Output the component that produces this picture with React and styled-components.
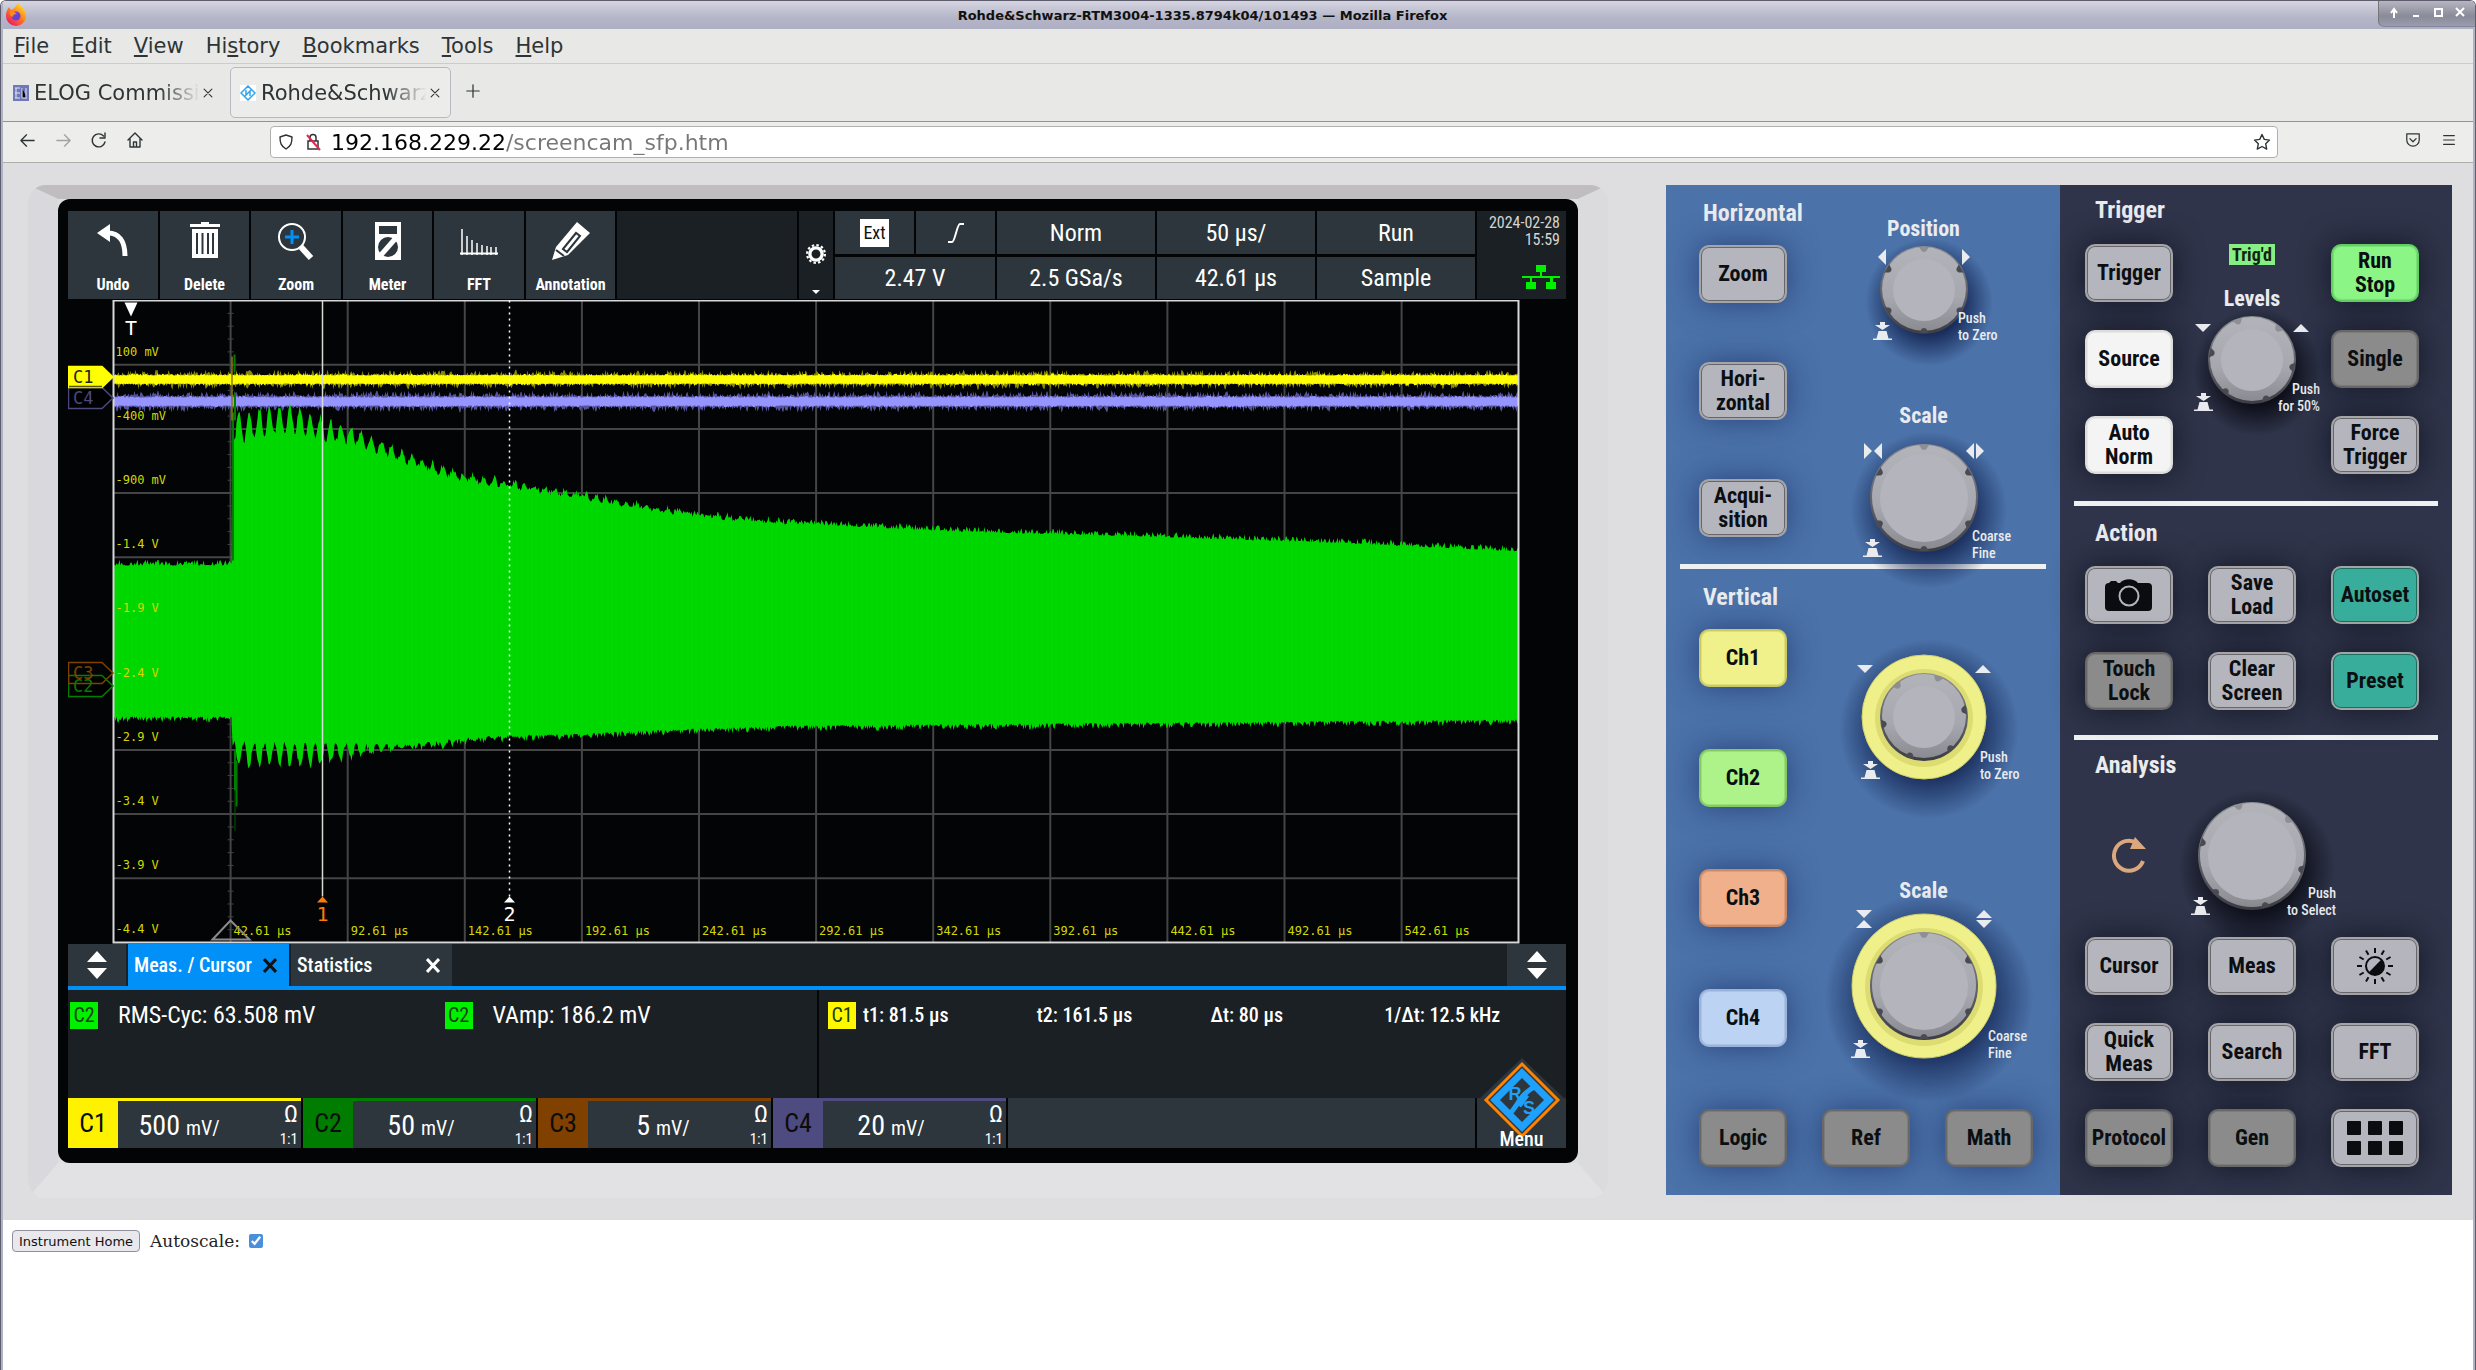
import React from "react";
import styled, { createGlobalStyle } from "styled-components";

const narrow = `"Roboto Condensed", "Liberation Sans Narrow", "Open Sans Condensed", "Liberation Sans", sans-serif`;
const mono = `"DejaVu Sans Mono", monospace`;

const GlobalStyle = createGlobalStyle`
  * {
    box-sizing: border-box;
  }
  body {
    margin: 0;
    background: white;
    font-family: "DejaVu Sans", sans-serif;
  }
  button {
    font: inherit;
    color: inherit;
    padding: 0;
    border: none;
    background: none;
  }
`;

/* ---------- browser window ---------- */

const Window = styled.div`
  min-height: 100vh;
  border: 1px solid #5d5d6e;
  border-bottom: none;
  border-radius: 6px 6px 0 0;
  overflow: hidden;
`;

const Frame = styled.div`
  min-height: calc(100vh - 1px);
  border: solid #b0b2c5;
  border-width: 0 2px;
`;

const TitleBar = styled.header`
  display: flex;
  align-items: center;
  height: 28px;
  background: linear-gradient(#d5d5e2, #b4b5c7 60%, #aeafc2);
  font-size: 13px;
  font-weight: bold;
  color: #111;

  h1 {
    flex: 1;
    margin: 0;
    font-size: inherit;
    text-align: center;
  }
`;

const FirefoxIcon = styled.svg`
  margin-left: 2px;
`;

const WindowButtons = styled.div`
  display: flex;
  align-self: flex-start;
  height: 26px;
  margin-right: -2px;
  padding: 0 4px 0 4px;
  background: linear-gradient(#b5b6c0, #8a8b99 60%, #9a9bac);
  border-left: 1px solid #777;
  border-bottom: 1px solid #85869a;
  border-bottom-left-radius: 6px;

  button {
    width: 22px;
  }
`;

const MenuBar = styled.nav`
  display: flex;
  align-items: center;
  gap: 22px;
  height: 35px;
  padding-left: 11px;
  background: #e8e8e6;
  border-bottom: 1px solid #cccccb;
  font-size: 21px;
  color: #2e3436;
`;

const TabStrip = styled.div`
  display: flex;
  align-items: center;
  gap: 6px;
  height: 58px;
  background: #e8e8e6;
  border-bottom: 1px solid #93938f;
`;

const Tab = styled.div`
  display: flex;
  align-items: center;
  gap: 5px;
  width: 221px;
  height: 51px;
  padding: 0 7px 0 9px;
  border: 1px solid ${(p) => (p.$active ? "#b7b9c2" : "transparent")};
  border-radius: 5px;
  background: ${(p) => (p.$active ? "#ececea" : "none")};
  font-size: 21px;
  color: #2e3436;

  span {
    flex: 1;
    overflow: hidden;
    white-space: nowrap;
    mask-image: linear-gradient(90deg, #000 75%, transparent);
  }
`;

const CloseTab = styled.button`
  width: 16px;
  height: 24px;
  margin-left: -5px;
`;

const NewTab = styled.button`
  width: 32px;
  height: 32px;
`;

const NavBar = styled.div`
  display: flex;
  align-items: center;
  height: 41px;
  background: #ededeb;
  border-bottom: 1px solid #afafac;
  color: #2e3436;
`;

const NavButtons = styled.div`
  display: flex;
  justify-content: ${(p) => (p.$end ? "flex-end" : "flex-start")};
  width: ${(p) => (p.$end ? 195 : 267)}px;
  padding: 0 6px;

  button {
    width: 36px;
    height: 32px;
  }

  button:disabled {
    opacity: 0.4;
  }
`;

const UrlBar = styled.div`
  display: flex;
  flex: 1;
  align-items: center;
  gap: 8px;
  height: 32px;
  padding: 0 6px;
  border: 1px solid #b0b0ad;
  border-radius: 4px;
  background: white;

  input {
    flex: 1;
    border: none;
    outline: none;
    padding: 0;
    font: 22px "DejaVu Sans", sans-serif;
    color: transparent;
    background: linear-gradient(90deg, #000 175px, #777 175px);
    background-clip: text;
  }
`;

/* ---------- instrument ---------- */

const Instrument = styled.main`
  display: flex;
  align-items: flex-start;
  gap: 58px;
  padding: 22px 21px 22px 25px;
  background: #dedde0;
`;

const Bezel = styled.section`
  flex: 1;
  min-width: 0;
  border: solid;
  border-width: 14px 30px 35px;
  border-color: #bfbdc0 #dbdadd #e2e2e4 #d9d8dc;
  border-radius: 18px;
`;

const Screen = styled.div`
  padding: 12px 12px 15px 10px;
  background: #030406;
  border-radius: 12px;
  font-family: ${narrow};
  color: white;
`;

const Toolbar = styled.div`
  display: grid;
  grid-template-columns: repeat(3, 90px 89px) 1fr 34px 160px repeat(3, 158px) 89px;
  gap: 2px;
  height: 88px;
  margin-bottom: 1px;
`;

const Tool = styled.button`
  display: flex;
  flex-direction: column;
  align-items: center;
  justify-content: space-between;
  padding: 8px 0 4px;
  background: #2c363c;
  font-size: 16px;
  font-weight: bold;
  line-height: 20px;
`;

const DarkCell = styled.div`
  background: #1a2023;
`;

const GearButton = styled.button`
  display: flex;
  flex-direction: column;
  align-items: center;
  justify-content: flex-end;
  gap: 26px;
  padding-bottom: 5px;
  background: #1a2023;
`;

const InfoColumn = styled.div`
  display: grid;
  grid-template-rows: 43px 42px;
  gap: 3px;
`;

const Info = styled.div`
  display: flex;
  align-items: center;
  justify-content: center;
  background: #2c363c;
  font-size: 24px;
`;

const InfoSplit = styled.div`
  display: grid;
  grid-template-columns: 1fr 1fr;
  gap: 2px;
`;

const ExtBadge = styled.span`
  padding: 0 3px;
  background: white;
  color: #111;
  font-size: 18px;
  line-height: 28px;
`;

const Clock = styled.div`
  display: flex;
  flex-direction: column;
  align-items: flex-end;
  justify-content: space-between;
  padding: 3px 6px 10px;
  background: #1a2023;
  font-size: 16px;
  line-height: 17px;
  text-align: right;
  white-space: nowrap;
  color: #d5d5d5;
`;

const Plot = styled.svg`
  display: block;
  width: 100%;
  height: auto;
`;

const TabRow = styled.div`
  display: grid;
  grid-template-columns: 58px 161px 161px 1fr 59px;
  gap: 0 2px;
  height: 46px;
  border-bottom: 4px solid #0190f7;
  background: #1a2023;
`;

const Stepper = styled.button`
  display: flex;
  align-items: center;
  justify-content: center;
  background: #2c363c;
`;

const PanelTab = styled.div`
  display: flex;
  align-items: center;
  justify-content: space-between;
  padding: 0 12px 0 6px;
  background: ${(p) => (p.$active ? "#0190f7" : "#2c363c")};
  font-size: 20px;
  font-weight: 500;

  button {
    display: flex;
    color: ${(p) => (p.$active ? "#111" : "white")};
  }
`;

const Readouts = styled.div`
  display: grid;
  grid-template-columns: 1fr 1fr 2fr;
  height: 108px;
  background: #1a2023;
`;

const Measurement = styled.div`
  display: flex;
  align-items: center;
  gap: 20px;
  height: 50px;
  padding-left: 2px;
  font-size: 24px;
`;

const Cursors = styled.div`
  border-left: 2px solid #050607;
`;

const CursorValues = styled.div`
  display: grid;
  grid-template-columns: 28px repeat(4, minmax(0, 1fr));
  align-items: center;
  gap: 7px;
  height: 50px;
  padding: 0 15px 0 9px;
  font-size: 20px;
  font-weight: 500;
`;

const Source = styled.span`
  width: 28px;
  background: ${(p) => p.$color};
  color: #12420f;
  font-size: 20px;
  font-weight: normal;
  line-height: 27px;
  text-align: center;
`;

const Channels = styled.div`
  display: grid;
  grid-template-columns: repeat(4, 233px) 1fr 89px;
  grid-template-rows: 50px;
  gap: 2px;
`;

const Channel = styled.div`
  display: grid;
  grid-template-columns: 50px 62px 1fr auto;
  grid-template-rows: 47px;
  background: #2c363c;
  border-top: 3px solid ${(p) => p.$color};

  b {
    background: ${(p) => p.$color};
    color: #0c0c0c;
    font-size: 26px;
    font-weight: normal;
    line-height: 44px;
    text-align: center;
  }
`;

const Scale = styled.span`
  font-size: ${(p) => (p.$unit ? 20 : 28)}px;
  line-height: ${(p) => (p.$unit ? 54 : 50)}px;
  padding-left: ${(p) => (p.$unit ? 6 : 0)}px;
  text-align: ${(p) => (p.$unit ? "left" : "right")};
`;

const Coupling = styled.span`
  display: flex;
  flex-direction: column;
  justify-content: space-between;
  padding: 0 3px 1px 0;
  text-align: right;
  font-size: 15px;
  line-height: 16px;

  i {
    font-style: normal;
    font-size: 24px;
    line-height: 26px;
  }
`;

const Blank = styled.div`
  background: #2c363c;
`;

const MenuButton = styled.button`
  display: flex;
  flex-direction: column;
  align-items: center;
  justify-content: flex-end;
  background: #2c363c;
  font-size: 20px;
  font-weight: 500;
  line-height: 18px;

  svg {
    flex: none;
    margin-bottom: -10px;
  }
`;

/* ---------- front panel ---------- */

const FrontPanel = styled.section`
  display: grid;
  grid-template-columns: 394px 392px;
  font-family: ${narrow};
  font-weight: bold;
  color: #e9ebee;
`;

const BluePanel = styled.div`
  background: #4b72a9;
`;

const DarkPanel = styled.div`
  background: #2f344a;
`;

const Rule = styled.hr`
  height: ${(p) => p.$size}px;
  margin: 0 14px;
  border: none;
  background: #f0f1f2;
`;

const SplitSection = styled.div`
  display: grid;
  grid-template-columns: 88px 1fr;
  padding-left: 33px;
`;

const Section = styled.div`
  padding: ${(p) => p.$top}px 32px ${(p) => p.$bottom}px 25px;
`;

const Heading = styled.h2`
  margin: 0 0 0 ${(p) => p.$indent}px;
  font-size: 24px;
  line-height: 30px;
`;

const KeyColumn = styled.div`
  display: flex;
  flex-direction: column;
  gap: ${(p) => p.$gap}px;
  padding-top: 17px;
`;

const LeftSide = styled.div`
  padding-top: 13px;
`;

const KnobSide = styled.div`
  display: flex;
  flex-direction: column;
  align-items: center;
  padding-top: ${(p) => p.$top}px;
`;

const KeyRow = styled.div`
  display: flex;
  gap: 35px;
  padding: 62px 0 28px 33px;
`;

const KeyGrid = styled.div`
  display: grid;
  grid-template-columns: repeat(3, 88px);
  gap: 28px 35px;
  padding-top: ${(p) => p.$top}px;
`;

const KnobCell = styled.div`
  grid-area: 1 / 2 / 4 / 3;
  display: flex;
  flex-direction: column;
  align-items: center;
`;

const AnalysisTop = styled.div`
  display: grid;
  grid-template-columns: repeat(3, 88px);
  gap: 35px;
  place-items: center;
`;

const KnobLabel = styled.h3`
  margin: 0;
  font-size: 22px;
  line-height: 26px;
`;

const Triggered = styled.span`
  margin-bottom: 21px;
  padding: 0 3px;
  background: #86ee85;
  color: #10240f;
  font-size: 18px;
  line-height: 21px;
`;

const faces = {
  gray: ["#b5b5be", "#a5a5a8", "#66666c"],
  off: ["#8b8b8b", "#686868", "#7c7c7c"],
  white: ["#f4f4f4", "#dcdcdc", "#e8e8e8"],
  run: ["#8bf586", "#63cf63", "#7ae278"],
  teal: ["#39ad9b", "#a0a6a4", "#1c6e62"],
  ch1: ["#f0f18b", "#c9c966", "#dfe07b"],
  ch2: ["#aef38a", "#83c964", "#9ae077"],
  ch3: ["#f1b08c", "#c98a67", "#e09f7a"],
  ch4: ["#bdd3f3", "#9bb3d8", "#aac3e6"],
};

const Key = styled.button`
  display: flex;
  align-items: center;
  justify-content: center;
  width: 88px;
  height: 58px;
  border: 2px solid ${(p) => faces[p.$face][1]};
  border-radius: 10px;
  background: ${(p) => faces[p.$face][0]};
  box-shadow: inset 0 0 0 1px ${(p) => faces[p.$face][2]},
    0 0 30px ${(p) => (p.$blue ? "rgba(15, 30, 85, 0.55)" : "rgba(8, 10, 20, 0.7)")};
  font-size: 22px;
  line-height: 24px;
  white-space: pre-line;
  color: #0c0f12;
`;

const KnobArt = styled.svg`
  display: block;
  overflow: visible;
`;

const Footer = styled.footer`
  display: flex;
  align-items: center;
  gap: 10px;
  padding: 10px 9px;
  font: 17px "DejaVu Serif", serif;
  color: #222;

  button {
    height: 22px;
    padding: 0 6px;
    border: 1px solid #8f8f9d;
    border-radius: 4px;
    background: #e9e9ed;
    font: 13px "DejaVu Sans", sans-serif;
    color: #111;
  }

  input {
    width: 14px;
    height: 14px;
    margin: 0 0 0 9px;
    vertical-align: -1px;
    accent-color: #4a8fdc;
  }
`;

/* ---------- waveform ---------- */

// small seeded generator so the noise is the same on every render
function noise(seed) {
  let s = seed;
  return () => {
    s = (s * 16807) % 2147483647;
    return s / 2147483647;
  };
}

function lerp(points, x) {
  for (let i = 1; i < points.length; i++) {
    if (x <= points[i][0]) {
      const [x0, y0] = points[i - 1];
      const [x1, y1] = points[i];
      return y0 + ((x - x0) / (x1 - x0)) * (y1 - y0);
    }
  }
  return points[points.length - 1][1];
}

function band(y, core, spread, seed) {
  const rnd = noise(seed);
  const top = [];
  const bottom = [];
  for (let x = 0; x <= 1405; x++) {
    top.push(`${x},${(y - core - spread * rnd() ** 3).toFixed(1)}`);
    bottom.unshift(`${x},${(y + core + spread * rnd() ** 3).toFixed(1)}`);
  }
  return [...top, ...bottom].join(" ");
}

const upper = [
  [120, 112], [135, 112], [160, 108], [185, 109], [209, 120], [243, 130], [294, 156],
  [345, 174], [396, 183], [447, 191], [498, 200], [549, 209], [600, 216], [651, 221],
  [720, 225], [834, 231], [1055, 237], [1229, 243], [1405, 251],
];
const upperDip = [[120, 34], [140, 30], [209, 22], [243, 16], [294, 9], [396, 6], [549, 4], [760, 0], [1405, 0]];
const lower = [
  [120, 463], [190, 464], [209, 461], [235, 456], [266, 450], [313, 445], [352, 440],
  [396, 436], [469, 433], [527, 430], [677, 425], [1405, 419],
];
const lowerDip = [[120, 24], [200, 22], [235, 14], [266, 7], [320, 4], [450, 0], [1405, 0]];

function greenTrace() {
  const rnd = noise(77);
  const top = [];
  const bottom = [];
  for (let x = 0; x <= 1405; x++) {
    const up = 6 * rnd() ** 2;
    const down = 6 * rnd() ** 2;
    if (x < 119) {
      top.push(`${x},${(265 - up).toFixed(1)}`);
      bottom.unshift(`${x},${(416 + down).toFixed(1)}`);
      continue;
    }
    const wave = Math.abs(Math.sin(((x - 156) * Math.PI) / 10.2));
    top.push(`${x},${(lerp(upper, x) + lerp(upperDip, x) * wave ** 2 - up).toFixed(1)}`);
    bottom.unshift(`${x},${(lerp(lower, x) - lerp(lowerDip, x) * wave ** 2 + down).toFixed(1)}`);
  }
  return [...top, ...bottom].join(" ");
}

const yellowCore = band(79, 4, 2, 11);
const yellowHaze = band(79, 4, 6, 23);
const violetCore = band(101, 4, 2, 31);
const violetHaze = band(101, 5, 6, 47);
const green = greenTrace();

const voltLabels = ["100 mV", "-400 mV", "-900 mV", "-1.4 V", "-1.9 V", "-2.4 V", "-2.9 V", "-3.4 V", "-3.9 V", "-4.4 V"];
const columns = Array.from({ length: 12 }, (_, i) => i);
const ticks = Array.from({ length: 50 }, (_, i) => i);

const COL = 117.1;
const ROW = 64.2;

function Marker({ y, color, label, fill = "black", text = color }) {
  return (
    <g>
      <path d={`M0.5 ${y - 10.5}H34L45 ${y}L34 ${y + 10.5}H0.5Z`} fill={fill} stroke={color} strokeWidth="1.5" />
      <text x="5" y={y + 6} fontSize="17" fill={text} fontFamily={mono}>{label}</text>
    </g>
  );
}

function Waveform() {
  return (
    <Plot viewBox="0 0 1498 644" role="img" aria-label="Waveform">
      <defs>
        <pattern id="sweep" width="5" height="10" patternUnits="userSpaceOnUse">
          <rect width="2" height="10" fill="#00c400" opacity="0.16" />
        </pattern>
      </defs>
      <g transform="translate(45.5 0.5)">
        <g stroke="#454545" strokeWidth="2">
          {columns.slice(1).map((i) => (
            <path key={i} d={`M${i * COL} 0V642`} />
          ))}
          {voltLabels.slice(1).map((label, i) => (
            <path key={label} d={`M0 ${(i + 1) * ROW}H1405`} />
          ))}
          {ticks.map((i) => (
            <path key={i} d={`M${COL - 3} ${i * 12.84}h6`} strokeWidth="1" />
          ))}
        </g>
        <polygon points={violetHaze} fill="#55549a" />
        <polygon points={violetCore} fill="#9694ff" />
        <polygon points={green} fill="#00d900" />
        <polygon points={green} fill="url(#sweep)" />
        <path d="M119.5 112V260" stroke="#007a00" strokeWidth="2" />
        <path d="M121 54V72M121.5 92V120M121.5 450V490M123 460V506" stroke="#007d00" strokeWidth="2" />
        <path d="M121.5 490V530" stroke="#005a00" strokeWidth="1" />
        <polygon points={yellowHaze} fill="#8a8a00" />
        <polygon points={yellowCore} fill="#ffff00" />
        <path d="M118.5 56V120" stroke="#8a7a00" strokeWidth="1.5" />
        <rect width="1405" height="642" fill="none" stroke="#d8d8d8" strokeWidth="2" />

        <g fontFamily={mono} fontSize="12" fill="#d2d800">
          {voltLabels.map((label, i) => (
            <text key={label} x="2" y={55 + i * ROW}>{label}</text>
          ))}
          {columns.slice(1).map((i) => (
            <text key={i} x={i * COL + 3} y="634">{(i * 50 - 7.39).toFixed(2)} µs</text>
          ))}
        </g>
        <path d="M99 639L117 620L136 639Z" fill="none" stroke="#8a8a8a" strokeWidth="2" />

        <path d="M209 0V596" stroke="#d5dcd5" strokeWidth="1.5" />
        <path d="M396 0V596" stroke="white" strokeWidth="1.5" strokeDasharray="2 4" />
        <path d="M203.5 602l5.5 -6l5.5 6z" fill="#ff7b00" />
        <path d="M390.5 602l5.5 -6l5.5 6z" fill="white" />
        <g fontFamily={mono} fontSize="20" textAnchor="middle">
          <text x="209" y="620" fill="#ff7b00">1</text>
          <text x="396" y="620" fill="white">2</text>
          <text x="17.5" y="34" fill="white">T</text>
        </g>
        <path d="M11 2h13l-6.5 14z" fill="white" />
      </g>
      <Marker y={98} color="#4a4980" label="C4" />
      <Marker y={77} color="#ffff00" fill="#ffff00" text="#222" label="C1" />
      <path d="M1 86.5H34" stroke="#555500" strokeWidth="1.5" />
      <Marker y={386} color="#007f00" label="C2" />
      <Marker y={373} color="#804000" fill="none" label="C3" />
    </Plot>
  );
}

/* ---------- knobs ---------- */

const arrows = {
  horizontal: [["l"], ["r"]],
  squeezeH: [["r", "l"], ["l", "r"]],
  vertical: [["d"], ["u"]],
  squeezeV: [["d", "u"], ["u", "d"]],
};

const arrowPaths = {
  l: "M4 -8V8L-4 0Z",
  r: "M-4 -8V8L4 0Z",
  u: "M-8 4H8L0 -4Z",
  d: "M-8 -4H8L0 4Z",
};

function Arrow({ kinds, x, y }) {
  return kinds.map((kind, i) => {
    const shift = kinds.length === 1 ? 0 : i ? 5 : -5;
    const isH = kind === "l" || kind === "r";
    return (
      <path key={i} d={arrowPaths[kind]} transform={`translate(${x + (isH ? shift : 0)} ${y + (isH ? 0 : shift)})`} />
    );
  });
}

function Knob({ height, cy, r, ring, twist = 0, arrow, arrowAt = [0, 0], press, hint, hintAt, hintEnd, blue }) {
  const notches = [0, 60, 120, 180, 240, 300].map((a) => a + twist);
  const face = r > 50 ? r - 10 : r - 13;
  const id = `${blue ? "b" : "d"}${r}-${cy}`;
  return (
    <KnobArt width="88" height={height}>
      <defs>
        <radialGradient id={`s${id}`}>
          <stop offset="50%" stopColor={blue ? "#122350" : "#080a12"} stopOpacity="0.9" />
          <stop offset="100%" stopColor={blue ? "#122350" : "#080a12"} stopOpacity="0" />
        </radialGradient>
        <linearGradient id={`r${id}`} x1="0" y1="0" x2="0" y2="1">
          <stop offset="0%" stopColor="#b3b3ba" />
          <stop offset="60%" stopColor="#a7a7af" />
          <stop offset="100%" stopColor="#8a8a91" />
        </linearGradient>
        <linearGradient id={`e${id}`} x1="0" y1="0" x2="0" y2="1">
          <stop offset="0%" stopColor="#8d8d94" />
          <stop offset="100%" stopColor="#3c3d44" />
        </linearGradient>
      </defs>
      <g transform={`translate(44 ${cy})`}>
        <circle cx="5" cy="12" r={(ring || r) * 1.45} fill={`url(#s${id})`} />
        {ring && (
          <>
            <circle r={ring} fill="#eff089" stroke="#d0d068" />
            <circle r={r + 5} cy="1" fill="#dcdc72" />
          </>
        )}
        <circle r={r} fill={`url(#e${id})`} />
        <circle r={r - 2} cy="-1" fill={`url(#r${id})`} />
        {notches.map((a) => (
          <path
            key={a}
            d={`M-5 ${1 - r}H5C3 ${3 - r} 3 ${6 - r} 0 ${6 - r}S-3 ${3 - r} -5 ${1 - r}Z`}
            transform={`rotate(${a})`}
            fill={Math.cos((a * Math.PI) / 180) > 0.6 ? "#8e8e95" : "#4a4b52"}
          />
        ))}
        <circle r={face} fill="#b4b4bd" />
        <g fill="#e9ebee">
          {arrow && (
            <>
              <Arrow kinds={arrows[arrow][0]} x={-arrowAt[0]} y={arrowAt[1]} />
              <Arrow kinds={arrows[arrow][1]} x={arrowAt[0]} y={arrowAt[1]} />
            </>
          )}
          <path transform={`translate(${press[0]} ${press[1]})`} d="M7 0h5v3h5l-7.500 5l-7.500 -5h5zM5.500 9h8l2 7.500h3.500v1.500h-19v-1.500h3.500z" />
          <text fontSize="14" fontWeight="500" textAnchor={hintEnd ? "end" : "start"}>
            <tspan x={hintAt[0]} y={hintAt[1]}>{hint[0]}</tspan>
            <tspan x={hintAt[0]} y={hintAt[1] + 17}>{hint[1]}</tspan>
          </text>
        </g>
      </g>
    </KnobArt>
  );
}

/* ---------- icons ---------- */

const UndoIcon = () => (
  <svg width="32" height="44" viewBox="0 -3 32 40" fill="none">
    <path d="M0 9L13 0V18Z" fill="white" />
    <path d="M11 9C22 9 28 17 28 32" stroke="white" strokeWidth="5" />
  </svg>
);

const TrashIcon = () => (
  <svg width="30" height="44" viewBox="0 -2 30 42" fill="white">
    <path d="M0 2h11V0h8v2h11v3H0zM2 7h26v29H2z" />
    <path d="M7 11v21M12.500 11v21M18 11v21M23 11v21" stroke="#2c363c" strokeWidth="2" />
  </svg>
);

const ZoomIcon = () => (
  <svg width="38" height="44" viewBox="0 0 38 44" fill="none">
    <circle cx="15" cy="18" r="13" stroke="white" strokeWidth="2" />
    <path d="M24 28L34 39" stroke="white" strokeWidth="6" />
    <path d="M15 11v14M8 18h14" stroke="#0190f7" strokeWidth="3" />
  </svg>
);

const MeterIcon = () => (
  <svg width="26" height="44" viewBox="0 -2 26 42">
    <path d="M0 0h26v38H0z" fill="white" />
    <path d="M4 4h18v8H4z" fill="#2c363c" />
    <circle cx="13" cy="25" r="10" fill="#2c363c" />
    <path d="M6 33L20 17" stroke="white" strokeWidth="5" />
  </svg>
);

const FftIcon = () => (
  <svg width="38" height="44" viewBox="0 0 38 44" fill="none" stroke="white">
    <path d="M0 34.500h38" strokeWidth="2" />
    <path d="M2 36V10M7 36V17M12 36V21M17 36V24M22 36V26M27 36V27M31 36V28M36 36V28" strokeWidth="1.500" />
  </svg>
);

const PencilIcon = () => (
  <svg width="38" height="44" viewBox="0 -2 38 42">
    <path d="M0 38L4 25L25 0L38 11L16 33Z" fill="white" />
    <path d="M11 27L24 11L28 14L15 30Z" fill="none" stroke="#2c363c" strokeWidth="2" />
    <path d="M4 28L12 34" stroke="#2c363c" strokeWidth="2" />
  </svg>
);

const GearIcon = () => (
  <svg width="20" height="20" viewBox="-9 -9 18 18">
    <circle r="5.500" fill="none" stroke="white" strokeWidth="3" />
    <circle r="8" fill="none" stroke="white" strokeWidth="2" strokeDasharray="2.200 2" />
  </svg>
);

const LanIcon = () => (
  <svg width="38" height="24" viewBox="0 0 38 24" fill="#00f000">
    <path d="M14 0h10v7h-4v4h18v2H31v4h3v7h-10v-7h4v-4H10v4h4v7H4v-7h4v-4H0v-2h18V7h-4z" />
  </svg>
);

const StepIcon = () => (
  <svg width="20" height="28" viewBox="0 0 20 28" fill="white">
    <path d="M0 11L10 0L20 11zM0 17h20L10 28z" />
  </svg>
);

const CrossIcon = () => (
  <svg width="14" height="15" viewBox="0 0 14 15" stroke="currentColor" strokeWidth="3">
    <path d="M1 1L13 14M13 1L1 14" />
  </svg>
);

const LogoIcon = () => (
  <svg width="88" height="82" viewBox="-44 -42 88 82">
    <path d="M0 -42L44 0H-44Z" fill="#2c363c" />
    <path d="M0 -36L36 0L0 36L-36 0Z" fill="#2c363c" stroke="#ff8200" strokeWidth="3" />
    <path d="M0 -27L27 0L0 27L-27 0Z" fill="none" stroke="#1fa0fb" strokeWidth="7" />
    <path d="M-15 16C-4 8 -4 -5 14 -14M-3 6L5 -5" fill="none" stroke="#1fa0fb" strokeWidth="5" />
    <g fontFamily="Liberation Sans, sans-serif" fontWeight="bold" fontSize="18" fill="#1fa0fb" textAnchor="middle">
      <text x="-7" y="0">R</text>
      <text x="7" y="14">S</text>
    </g>
  </svg>
);

const CameraIcon = () => (
  <svg width="48" height="34" viewBox="0 0 48 34">
    <path d="M4 5L6 3H11L13 5H15C19 0 29 0 33 5H43Q47 5 47 9V29Q47 33 43 33H4Q0 33 0 29V9Q0 5 4 5Z" fill="#0a0c10" />
    <circle cx="24" cy="18" r="9.500" fill="#0a0c10" stroke="#b4b4bd" strokeWidth="2" />
  </svg>
);

const BrightnessIcon = () => (
  <svg width="38" height="38" viewBox="-19 -19 38 38" stroke="#0a0c10" strokeWidth="2">
    <circle r="9" fill="none" />
    <path d="M-6.400 6.400A9 9 0 0 0 6.400 -6.400Z" fill="#0a0c10" stroke="none" />
    {Array.from({ length: 12 }, (_, i) => (
      <path key={i} d="M0 -13V-18" transform={`rotate(${i * 30})`} />
    ))}
  </svg>
);

const GridIcon = () => (
  <svg width="56" height="35" viewBox="0 0 56 35" fill="#0a0c10">
    {[0, 21, 42].map((x) => (
      <g key={x}>
        <rect x={x} width="14" height="14" rx="1" />
        <rect x={x} y="20" width="14" height="14" rx="1" />
      </g>
    ))}
  </svg>
);

const RotateIcon = () => (
  <svg width="36" height="44" viewBox="0 0 36 44" fill="none">
    <path d="M32 24A15 15 0 1 1 26 6" stroke="#dba77c" strokeWidth="4" />
    <path d="M24 0L35 12H19Z" fill="#dba77c" />
  </svg>
);

function LineIcon({ children, size = 18 }) {
  return (
    <svg width={size} height={size} viewBox="0 0 18 18" fill="none" stroke="#2e3436" strokeWidth="1.400" strokeLinecap="round" strokeLinejoin="round">
      {children}
    </svg>
  );
}

const tools = [
  ["Undo", UndoIcon],
  ["Delete", TrashIcon],
  ["Zoom", ZoomIcon],
  ["Meter", MeterIcon],
  ["FFT", FftIcon],
  ["Annotation", PencilIcon],
];

const infos = [
  ["Norm", "2.5 GSa/s"],
  ["50 µs/", "42.61 µs"],
  ["Run", "Sample"],
];

const channels = [
  ["C1", "500", "#fff200"],
  ["C2", "50", "#007d00"],
  ["C3", "5", "#804000"],
  ["C4", "20", "#4d4b80"],
];

const menus = [
  ["", "F", "ile"],
  ["", "E", "dit"],
  ["", "V", "iew"],
  ["Hi", "s", "tory"],
  ["", "B", "ookmarks"],
  ["", "T", "ools"],
  ["", "H", "elp"],
];

function Browser() {
  return (
    <>
      <TitleBar>
        <FirefoxIcon width="22" height="24" viewBox="0 0 22 24">
          <defs>
            <linearGradient id="fox" x1="1" y1="0" x2="0.300" y2="1">
              <stop offset="0.100" stopColor="#ffe52c" />
              <stop offset="0.500" stopColor="#ff8a1e" />
              <stop offset="1" stopColor="#f0195a" />
            </linearGradient>
          </defs>
          <path d="M13 0C16 3 21 7 21 13A10 10 0 0 1 1 13C1 9 2 7 4 4L6 7C9 6 11 3 13 0Z" fill="url(#fox)" />
          <circle cx="11" cy="13" r="4.500" fill="#6a3fd8" />
          <path d="M5 8C8 8 10 9 12 11C9 11 8 12 8 14C5 13 4 11 5 8Z" fill="#ff8a1e" />
        </FirefoxIcon>
        <h1>Rohde&amp;Schwarz-RTM3004-1335.8794k04/101493 — Mozilla Firefox</h1>
        <WindowButtons>
          {["M6 13V5M3 8l3 -4l3 4", "M3 11h6", "M3 4h7v7h-7z", "M2 3l8 8M10 3l-8 8"].map((d) => (
            <button key={d} aria-label="Window control">
              <svg width="12" height="14" fill="none" stroke="white" strokeWidth="2">
                <path d={d} />
              </svg>
            </button>
          ))}
        </WindowButtons>
      </TitleBar>
      <MenuBar>
        {menus.map(([before, key, after]) => (
          <button key={after}>
            {before}
            <u>{key}</u>
            {after}
          </button>
        ))}
      </MenuBar>
      <TabStrip>
        <Tab>
          <svg width="16" height="16">
            <rect width="16" height="16" fill="#6f78b8" />
            <path d="M2 3h5M2 8h5M2 13h5M3 3v10M9 3v10h5M13 3v10" stroke="#e4e7ff" />
          </svg>
          <span>ELOG Commissioning</span>
          <CloseTab aria-label="Close tab">
            <LineIcon size={14}><path d="M4 4l10 10M14 4l-10 10" /></LineIcon>
          </CloseTab>
        </Tab>
        <Tab $active>
          <svg width="16" height="16">
            <rect width="16" height="16" fill="white" />
            <path d="M8 1l7 7l-7 7l-7 -7zM5 11l6 -6M6 5v5M10 6v5" fill="none" stroke="#2fa5ee" strokeWidth="1.500" />
          </svg>
          <span>Rohde&amp;Schwarz-RTM3004</span>
          <CloseTab aria-label="Close tab">
            <LineIcon size={14}><path d="M4 4l10 10M14 4l-10 10" /></LineIcon>
          </CloseTab>
        </Tab>
        <NewTab aria-label="New tab">
          <LineIcon size={16}><path d="M9 2v14M2 9h14" /></LineIcon>
        </NewTab>
      </TabStrip>
      <NavBar>
        <NavButtons>
          <button aria-label="Back"><LineIcon size={17}><path d="M16 9H2M8 3L2 9l6 6" /></LineIcon></button>
          <button aria-label="Forward" disabled><LineIcon size={17}><path d="M2 9h14M10 3l6 6l-6 6" /></LineIcon></button>
          <button aria-label="Reload"><LineIcon><path d="M15 11A6.500 6.500 0 1 1 13.500 5M15 2v5h-5" /></LineIcon></button>
          <button aria-label="Home"><LineIcon><path d="M2 9L9 2l7 7M4 8v8h10V8M7.500 16v-5h3v5" /></LineIcon></button>
        </NavButtons>
        <UrlBar>
          <LineIcon><path d="M9 2l6 2c0 6 -1 9 -6 12c-5 -3 -6 -6 -6 -12z" /></LineIcon>
          <svg width="20" height="18" viewBox="0 0 20 18" fill="none" stroke="#2e3436" strokeWidth="1.500">
            <path d="M5 8h10v8H5zM7 8V4.500a3 3 0 0 1 6 0V8" />
            <path d="M4 2l13 15" stroke="#e22850" strokeWidth="2" />
          </svg>
          <input aria-label="Address" defaultValue="192.168.229.22/screencam_sfp.htm" />
          <LineIcon><path d="M9 1.500l2.300 4.900l5.200 .7l-3.800 3.700l1 5.300L9 13.500l-4.700 2.600l1 -5.300L1.500 7.100l5.200 -.7z" /></LineIcon>
        </UrlBar>
        <NavButtons $end>
          <button aria-label="Save to Pocket"><LineIcon size={16}><path d="M2 2h14v7a7 7 0 0 1 -14 0zM5.500 7.500L9 11l3.500 -3.500" /></LineIcon></button>
          <button aria-label="Menu"><LineIcon size={16}><path d="M3 4h12M3 9h12M3 14h12" /></LineIcon></button>
        </NavButtons>
      </NavBar>
    </>
  );
}

function Scope() {
  return (
    <Bezel>
      <Screen>
        <Toolbar>
          {tools.map(([name, Icon]) => (
            <Tool key={name}>
              <Icon />
              {name}
            </Tool>
          ))}
          <DarkCell />
          <GearButton aria-label="Configure toolbar">
            <GearIcon />
            <svg width="8" height="4" fill="white"><path d="M0 0h8l-4 4z" /></svg>
          </GearButton>
          <InfoColumn>
            <InfoSplit>
              <Info><ExtBadge>Ext</ExtBadge></Info>
              <Info>
                <svg width="16" height="20" fill="none" stroke="white" strokeWidth="2">
                  <path d="M0 19H4C7 19 9 1 12 1H16" />
                </svg>
              </Info>
            </InfoSplit>
            <Info>2.47 V</Info>
          </InfoColumn>
          {infos.map(([top, bottom]) => (
            <InfoColumn key={top}>
              <Info>{top}</Info>
              <Info>{bottom}</Info>
            </InfoColumn>
          ))}
          <Clock>
            <span>2024-02-28<br />15:59</span>
            <LanIcon />
          </Clock>
        </Toolbar>
        <Waveform />
        <TabRow>
          <Stepper aria-label="Resize"><StepIcon /></Stepper>
          <PanelTab $active>
            Meas. / Cursor
            <button aria-label="Close Meas. / Cursor"><CrossIcon /></button>
          </PanelTab>
          <PanelTab>
            Statistics
            <button aria-label="Close Statistics"><CrossIcon /></button>
          </PanelTab>
          <div />
          <Stepper aria-label="Resize"><StepIcon /></Stepper>
        </TabRow>
        <Readouts>
          <Measurement><Source $color="#00f000">C2</Source>RMS-Cyc: 63.508 mV</Measurement>
          <Measurement><Source $color="#00f000">C2</Source>VAmp: 186.2 mV</Measurement>
          <Cursors>
            <CursorValues>
              <Source $color="#fff800">C1</Source>
              <span>t1: 81.5 µs</span>
              <span>t2: 161.5 µs</span>
              <span>Δt: 80 µs</span>
              <span>1/Δt: 12.5 kHz</span>
            </CursorValues>
          </Cursors>
        </Readouts>
        <Channels>
          {channels.map(([name, value, color]) => (
            <Channel key={name} $color={color}>
              <b>{name}</b>
              <Scale>{value}</Scale>
              <Scale $unit>mV/</Scale>
              <Coupling><i>Ω</i>1:1</Coupling>
            </Channel>
          ))}
          <Blank />
          <MenuButton>
            <LogoIcon />
            Menu
          </MenuButton>
        </Channels>
      </Screen>
    </Bezel>
  );
}

function Panel() {
  return (
    <FrontPanel>
      <BluePanel>
        <SplitSection>
          <LeftSide>
            <Heading $indent={4}>Horizontal</Heading>
            <KeyColumn $gap={59}>
              <Key $face="gray" $blue>Zoom</Key>
              <Key $face="gray" $blue>{"Hori-\nzontal"}</Key>
              <Key $face="gray" $blue>{"Acqui-\nsition"}</Key>
            </KeyColumn>
          </LeftSide>
          <KnobSide $top={31}>
            <KnobLabel>Position</KnobLabel>
            <Knob blue height={161} cy={48} r={44} arrow="horizontal" arrowAt={[42, -33]} press={[-51, 32]} hint={["Push", "to Zero"]} hintAt={[34, 33]} />
            <KnobLabel>Scale</KnobLabel>
            <Knob blue height={135} cy={69} r={54} arrow="squeezeH" arrowAt={[51, -47]} press={[-61, 41]} hint={["Coarse", "Fine"]} hintAt={[48, 43]} />
          </KnobSide>
        </SplitSection>
        <Rule $size={5} />
        <SplitSection>
          <LeftSide>
            <Heading $indent={4}>Vertical</Heading>
            <KeyColumn $gap={62}>
              <Key $face="ch1" $blue>Ch1</Key>
              <Key $face="ch2" $blue>Ch2</Key>
              <Key $face="ch3" $blue>Ch3</Key>
              <Key $face="ch4" $blue>Ch4</Key>
            </KeyColumn>
          </LeftSide>
          <KnobSide $top={0}>
            <Knob blue height={309} cy={148} r={44} ring={62} twist={20} arrow="vertical" arrowAt={[59, -48]} press={[-63, 44]} hint={["Push", "to Zero"]} hintAt={[56, 45]} />
            <KnobLabel>Scale</KnobLabel>
            <Knob blue height={142} cy={82} r={54} ring={72} arrow="squeezeV" arrowAt={[60, -67]} press={[-73, 54]} hint={["Coarse", "Fine"]} hintAt={[64, 55]} />
          </KnobSide>
        </SplitSection>
        <KeyRow>
          <Key $face="off" $blue>Logic</Key>
          <Key $face="off" $blue>Ref</Key>
          <Key $face="off" $blue>Math</Key>
        </KeyRow>
      </BluePanel>
      <DarkPanel>
        <Section $top={10} $bottom={27}>
          <Heading $indent={10}>Trigger</Heading>
          <KeyGrid $top={19}>
            <KnobCell>
              <Triggered>Trig'd</Triggered>
              <KnobLabel>Levels</KnobLabel>
              <Knob height={100} cy={48} r={44} twist={40} arrow="vertical" arrowAt={[49, -32]} press={[-58, 33]} hint={["Push", "for 50%"]} hintAt={[68, 34]} hintEnd />
            </KnobCell>
            <Key $face="gray">Trigger</Key>
            <Key $face="run">{"Run\nStop"}</Key>
            <Key $face="white">Source</Key>
            <Key $face="off">Single</Key>
            <Key $face="white">{"Auto\nNorm"}</Key>
            <Key $face="gray">{"Force\nTrigger"}</Key>
          </KeyGrid>
        </Section>
        <Rule $size={5} />
        <Section $top={12} $bottom={25}>
          <Heading $indent={10}>Action</Heading>
          <KeyGrid $top={18}>
            <Key $face="gray" aria-label="Screenshot"><CameraIcon /></Key>
            <Key $face="gray">{"Save\nLoad"}</Key>
            <Key $face="teal">Autoset</Key>
            <Key $face="off">{"Touch\nLock"}</Key>
            <Key $face="gray">{"Clear\nScreen"}</Key>
            <Key $face="teal">Preset</Key>
          </KeyGrid>
        </Section>
        <Rule $size={5} />
        <Section $top={10} $bottom={28}>
          <Heading $indent={10}>Analysis</Heading>
          <AnalysisTop>
            <RotateIcon />
            <Knob height={157} cy={76} r={54} twist={45} press={[-61, 41]} hint={["Push", "to Select"]} hintAt={[84, 42]} hintEnd />
          </AnalysisTop>
          <KeyGrid $top={0}>
            <Key $face="gray">Cursor</Key>
            <Key $face="gray">Meas</Key>
            <Key $face="gray" aria-label="Intensity"><BrightnessIcon /></Key>
            <Key $face="gray">{"Quick\nMeas"}</Key>
            <Key $face="gray">Search</Key>
            <Key $face="gray">FFT</Key>
            <Key $face="off">Protocol</Key>
            <Key $face="off">Gen</Key>
            <Key $face="gray" aria-label="Apps"><GridIcon /></Key>
          </KeyGrid>
        </Section>
      </DarkPanel>
    </FrontPanel>
  );
}

function App() {
  return (
    <Window>
      <GlobalStyle />
      <Frame>
        <Browser />
        <Instrument>
          <Scope />
          <Panel />
        </Instrument>
        <Footer>
          <button>Instrument Home</button>
          <label>
            Autoscale:
            <input type="checkbox" defaultChecked />
          </label>
        </Footer>
      </Frame>
    </Window>
  );
}

export default App;
